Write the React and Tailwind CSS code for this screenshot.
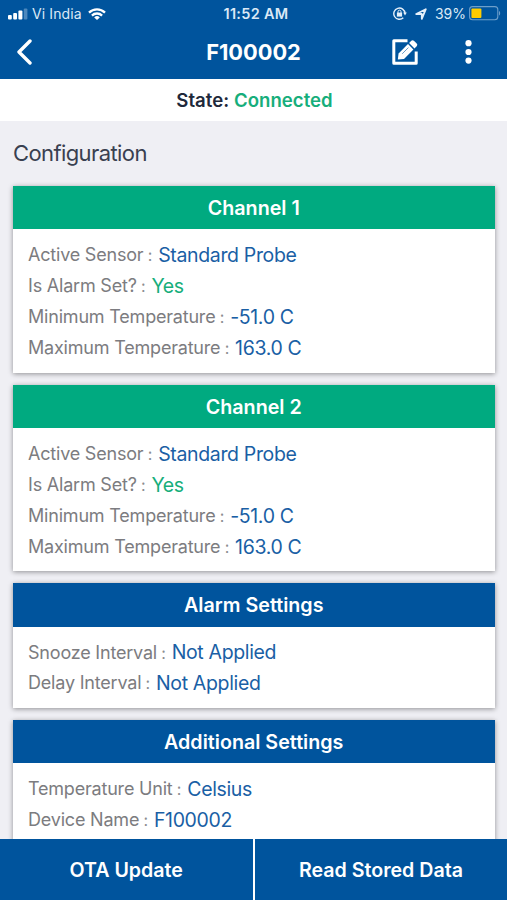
import React from 'react';

const sections = [
  {
    title: 'Channel 1',
    header: 'bg-[#00aa80]',
    rows: [
      { label: 'Active Sensor', value: 'Standard Probe' },
      { label: 'Is Alarm Set?', value: 'Yes', positive: true },
      { label: 'Minimum Temperature', value: '-51.0 C' },
      { label: 'Maximum Temperature', value: '163.0 C' },
    ],
  },
  {
    title: 'Channel 2',
    header: 'bg-[#00aa80]',
    rows: [
      { label: 'Active Sensor', value: 'Standard Probe' },
      { label: 'Is Alarm Set?', value: 'Yes', positive: true },
      { label: 'Minimum Temperature', value: '-51.0 C' },
      { label: 'Maximum Temperature', value: '163.0 C' },
    ],
  },
  {
    title: 'Alarm Settings',
    header: 'bg-[#00549d]',
    rows: [
      { label: 'Snooze Interval', value: 'Not Applied' },
      { label: 'Delay Interval', value: 'Not Applied' },
    ],
  },
  {
    title: 'Additional Settings',
    header: 'bg-[#00549d]',
    rows: [
      { label: 'Temperature Unit', value: 'Celsius' },
      { label: 'Device Name', value: 'F100002' },
    ],
  },
];

const StatusBar = () => (
  <div className="grid h-[27px] grid-cols-[1fr_auto_1fr] items-center pl-2 pr-[6px] text-[14px] text-[#dbe9f6]">
    <div className="flex items-center">
      <svg className="h-3 w-5" viewBox="0 0 20 12">
        <rect x="0" y="7" width="3.8" height="4.5" rx="1" fill="#fff" />
        <rect x="5.2" y="5" width="3.8" height="6.5" rx="1" fill="#fff" />
        <rect x="10.4" y="2.5" width="4" height="9" rx="1" fill="#fff" />
        <rect x="15.8" y="0.5" width="3.6" height="11" rx="1" fill="#4c88bd" />
      </svg>
      <span className="ml-1 tracking-[0.1px]">Vi India</span>
      <svg className="ml-[6px] h-3 w-[18px]" viewBox="0 0 18 12" fill="none" stroke="#fff" strokeWidth="2.3">
        <path d="M1 4.6a11.4 11.4 0 0 1 16 0" />
        <path d="M3.9 7.6a7.3 7.3 0 0 1 10.2 0" />
        <path d="M6.2 9.4a4 4 0 0 1 5.6 0L9 12z" fill="#fff" stroke="none" />
      </svg>
    </div>
    <div className="pl-[3px] text-[14.5px] font-semibold tracking-[0.3px]">11:52 AM</div>
    <div className="flex items-center justify-end">
      <svg className="h-[13px] w-[14px]" viewBox="0 0 14 13" fill="none" stroke="#e5f0fa" strokeWidth="1.4">
        <path d="M10.3 10.7A5.6 5.6 0 1 1 12 6.4" />
        <path d="M10.2 5.6h3.6L12 8.4z" fill="#e5f0fa" stroke="none" />
        <rect x="3.9" y="5.6" width="5.2" height="4" fill="#e5f0fa" stroke="none" />
        <path d="M5 6V4.7a1.5 1.5 0 0 1 3 0V6" strokeWidth="1" />
      </svg>
      <svg className="ml-2 h-3 w-3" viewBox="0 0 12 12" fill="none" stroke="#e5f0fa" strokeWidth="1.8" strokeLinejoin="round">
        <path d="M1.2 6 10.8 1.2 6.8 10.8V6z" />
      </svg>
      <span className="ml-[8px]">39%</span>
      <svg className="ml-[3px] h-[15px] w-8" viewBox="0 0 32 15">
        <rect x="0.6" y="0.6" width="28.2" height="13.2" rx="3" fill="none" stroke="#6d9fcb" strokeWidth="1.1" />
        <rect x="2.4" y="2.4" width="10" height="9.6" rx="1" fill="#ffcc00" />
        <path d="M30 5v4.6c1.6-.6 1.6-4 0-4.6z" fill="#6d9fcb" />
      </svg>
    </div>
  </div>
);

const NavBar = () => (
  <div className="grid flex-1 grid-cols-[1fr_auto_1fr] items-center pb-[2px]">
    <button className="ml-4 w-4">
      <svg className="h-[26px] w-4" viewBox="0 0 16 26" fill="none" stroke="#fff" strokeWidth="3.4" strokeLinecap="round" strokeLinejoin="round">
        <path d="M14 2 3 13 14 24" />
      </svg>
    </button>
    <h1 className="text-[21.8px] font-bold">F100002</h1>
    <div className="flex items-center justify-end pr-[35px]">
      <svg className="h-[26px] w-[27px]" viewBox="0 0 27 26" fill="none" stroke="#fff">
        <path d="M15.5 1.8H1.8V24.2H24.2V12.5" strokeWidth="3" strokeLinejoin="round" />
        <path d="M5.8 20.5 6.6 14.5 16 5.1 21.4 10.5 12 19.9z" fill="#fff" stroke="none" />
        <path d="M17.1 4 19.3 1.8q1.3-1.3 2.6 0l2.8 2.8q1.3 1.3 0 2.6L22.5 9.4z" fill="#fff" stroke="none" />
        <path d="M10.2 14.8l6.2-6.2" stroke="#00549d" strokeWidth="0.6" />
      </svg>
      <svg className="ml-[46px] h-6 w-[7px]" viewBox="0 0 7 24" fill="#fff">
        <circle cx="3.5" cy="3.2" r="3.1" />
        <circle cx="3.5" cy="12" r="3.1" />
        <circle cx="3.5" cy="20.6" r="3.1" />
      </svg>
    </div>
  </div>
);

const SettingsCard = ({ section }) => (
  <div className="shrink-0 bg-white shadow-[0_1px_5px_rgba(0,0,0,0.4)]">
    <div className={`flex h-[43.3px] items-center justify-center pt-[2px] text-[19.7px] font-semibold text-white ${section.header}`}>
      {section.title}
    </div>
    <div className="px-[15px] pt-[10px] pb-[9.6px]">
      {section.rows.map((row) => (
        <div key={row.label} className="flex h-[30.95px] items-center whitespace-nowrap">
          <span className="text-[18px] tracking-[-0.2px] text-[#7c7c80]">
            {row.label}
            <span className="text-[16px] text-[#8c8c90]"> :</span>
          </span>
          <span className={`ml-[6px] pt-[2px] text-[19.5px] tracking-[-0.35px] ${row.positive ? 'text-[#16ae7b]' : 'text-[#1a5fa5]'}`}>
            {row.value}
          </span>
        </div>
      ))}
    </div>
  </div>
);

const App = () => (
  <div className="flex h-[900px] w-[507px] flex-col overflow-hidden bg-[#efeff4] font-['Inter','Liberation_Sans',sans-serif]">
    <header className="flex h-[79px] shrink-0 flex-col bg-[#00549d] text-white">
      <StatusBar />
      <NavBar />
    </header>

    <div className="flex h-[42px] shrink-0 items-center justify-center bg-white pt-[2px] pl-[2px] text-[18.6px] font-semibold text-[#20283a]">
      State:<span className="ml-[5px] text-[#16ae7b]">Connected</span>
    </div>

    <main className="flex min-h-0 flex-1 flex-col gap-[12px] overflow-hidden pl-[13px] pr-[12.5px]">
      <h2 className="flex h-[53px] shrink-0 items-center pt-3 text-[22px] tracking-[-0.6px] text-[#394050]">Configuration</h2>
      {sections.map((section) => (
        <SettingsCard key={section.title} section={section} />
      ))}
    </main>

    <footer className="grid h-[61px] shrink-0 grid-cols-[252.5px_1fr] gap-[2.5px] bg-white text-[19.6px] font-semibold text-white">
      <button className="bg-[#00549d] pt-[2px]">OTA Update</button>
      <button className="bg-[#00549d] pt-[2px]">Read Stored Data</button>
    </footer>
  </div>
);

export default App;
